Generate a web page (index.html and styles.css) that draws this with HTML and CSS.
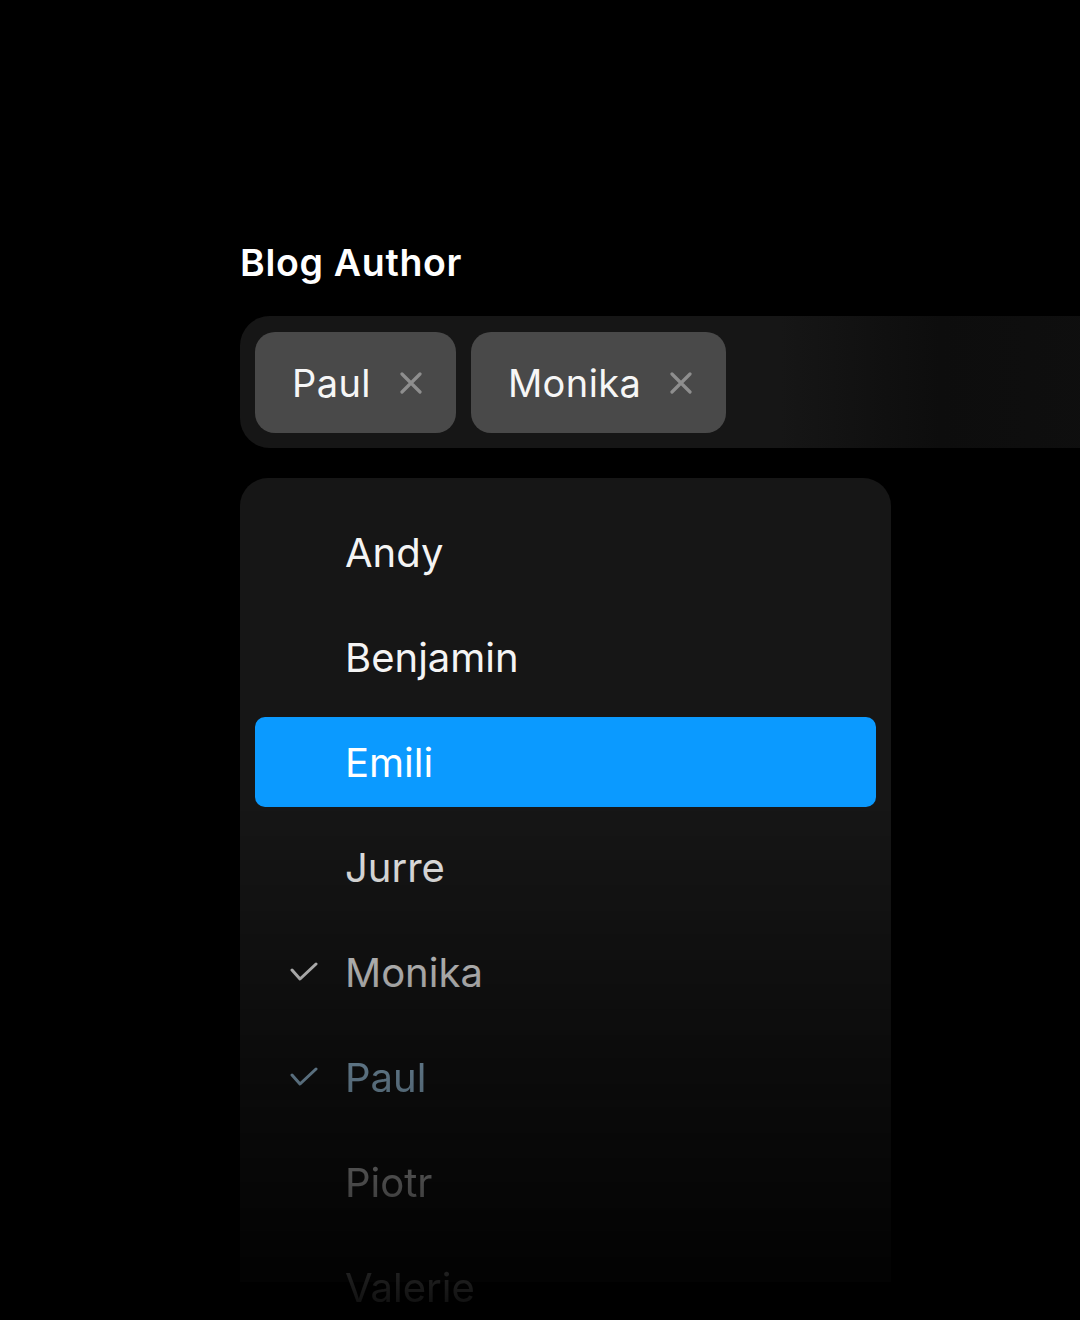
FILE: index.html
```html
<!DOCTYPE html>
<html lang="en">
<head>
<meta charset="utf-8">
<title>Blog Author</title>
<link rel="stylesheet" href="styles.css">
</head>
<body>
<main class="wrap">
  <h1 class="title">Blog Author</h1>
  <div class="field">
    <div class="chip"><span>Paul</span>
      <svg class="x" viewBox="0 0 22 22"><path d="M2 2 L20 20 M20 2 L2 20"/></svg>
    </div>
    <div class="chip"><span>Monika</span>
      <svg class="x" viewBox="0 0 22 22"><path d="M2 2 L20 20 M20 2 L2 20"/></svg>
    </div>
  </div>
  <div class="menu-area">
    <ul class="menu">
      <li class="item"><span class="slot"></span>Andy</li>
      <li class="item"><span class="slot"></span>Benjamin</li>
      <li class="item active"><span class="slot"></span>Emili</li>
      <li class="item"><span class="slot"></span>Jurre</li>
      <li class="item"><svg class="slot check" viewBox="0 0 28 20"><path d="M2 8 L10 17 L26 2"/></svg>Monika</li>
      <li class="item blue"><svg class="slot check" viewBox="0 0 28 20"><path d="M2 8 L10 17 L26 2"/></svg>Paul</li>
      <li class="item"><span class="slot"></span>Piotr</li>
      <li class="item"><span class="slot"></span>Valerie</li>
    </ul>
  </div>
</main>
</body>
</html>
```
FILE: styles.css
```css
html, body {
  margin: 0;
  padding: 0;
  background: #000;
}
body {
  width: 1080px;
  height: 1320px;
  overflow: hidden;
  font-family: Inter, "Noto Sans", "Liberation Sans", sans-serif;
  color: #f4f4f4;
}
.wrap {
  padding: 241px 0 0 240px;
}
.title {
  margin: 0;
  font-size: 37.5px;
  line-height: 44px;
  font-weight: 600;
  letter-spacing: 0.7px;
  color: #fff;
}
.field {
  margin-top: 31px;
  width: 880px;
  box-sizing: border-box;
  height: 132px;
  padding: 16px 15px 15px 15px;
  border-radius: 30px 0 0 30px;
  background: linear-gradient(to right, #161616 0, #161616 540px, #0d0d0d 700px, #0f0f0f 880px);
  display: flex;
  gap: 15px;
}
.chip {
  height: 101px;
  box-sizing: border-box;
  padding: 0 34px 0 37px;
  border-radius: 20px;
  background: #494949;
  display: flex;
  align-items: center;
  gap: 29px;
  font-size: 38px;
  letter-spacing: 0.4px;
  color: #f6f6f6;
}
.x {
  width: 22px;
  height: 22px;
  fill: none;
  stroke: #8e8e8e;
  stroke-width: 3.2;
  stroke-linecap: round;
}
.menu-area {
  margin-top: 30px;
  height: 880px;
  -webkit-mask-image: linear-gradient(to bottom, #000 0, #000 321px, rgba(0,0,0,0) 865px);
  mask-image: linear-gradient(to bottom, #000 0, #000 321px, rgba(0,0,0,0) 865px);
}
.menu {
  list-style: none;
  margin: 0;
  width: 651px;
  height: 804px;
  box-sizing: border-box;
  padding: 29px 15px 0 15px;
  border-radius: 28px 28px 0 0;
  background: #161616;
  display: flex;
  flex-direction: column;
  gap: 15px;
}
.item {
  height: 90px;
  flex: none;
  box-sizing: border-box;
  border-radius: 10px;
  display: flex;
  align-items: center;
  padding-left: 35px;
  font-size: 40px;
  color: #f4f4f4;
}
.item.active {
  background: #0b9aff;
  color: #fff;
}
.item.blue {
  color: #b4e0ff;
}
.slot {
  width: 28px;
  height: 20px;
  margin-right: 27px;
  flex: none;
}
.check {
  fill: none;
  stroke: currentColor;
  stroke-width: 3;
  stroke-linecap: round;
  stroke-linejoin: round;
}
```
